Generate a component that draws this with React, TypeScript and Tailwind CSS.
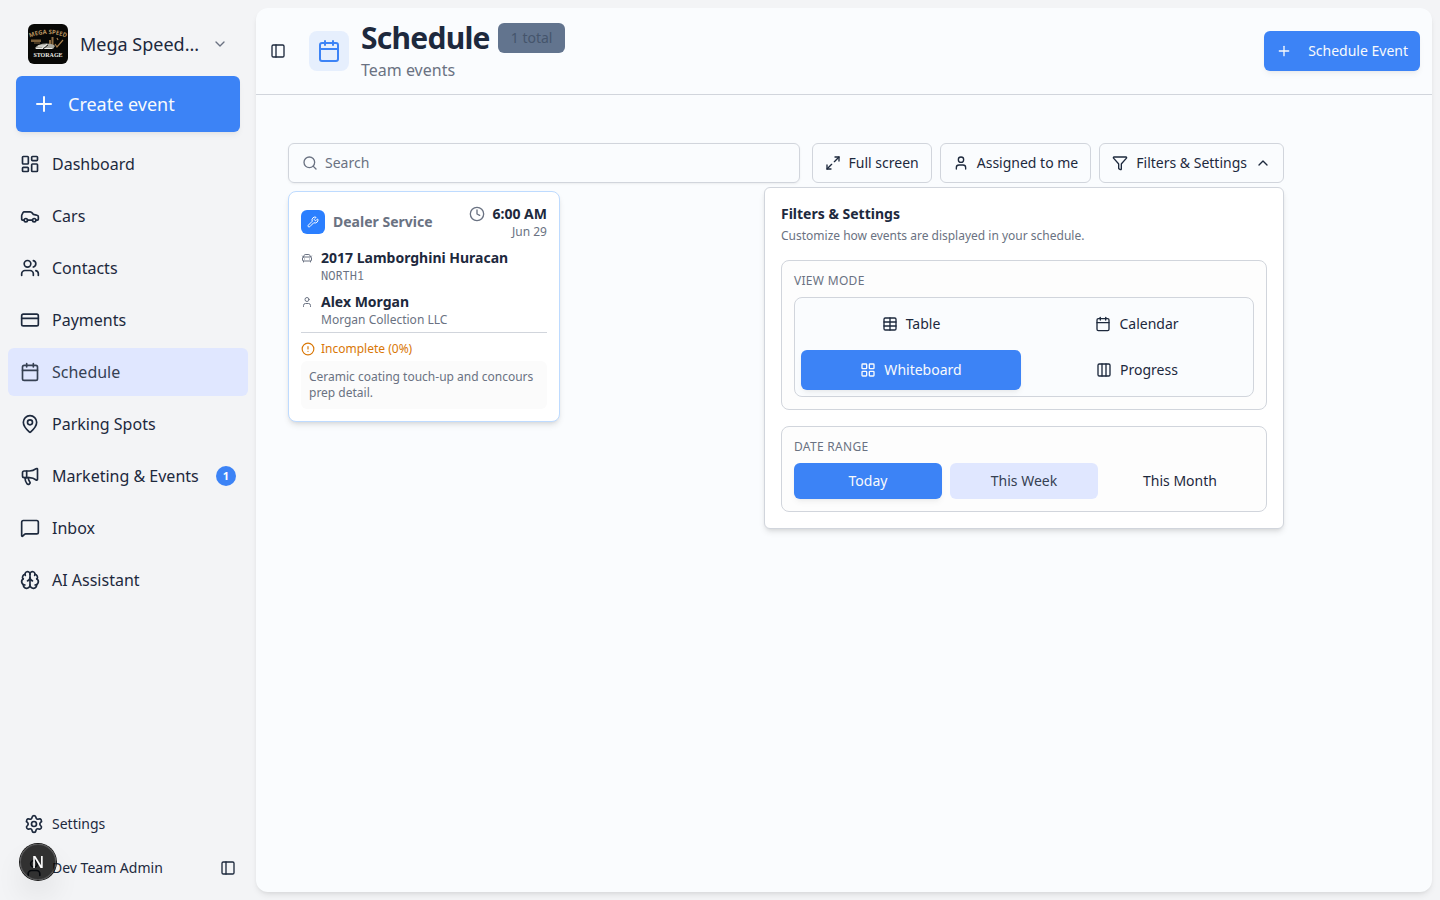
import { useState } from "react";
import {
	Brain,
	Calendar,
	Car,
	CarFront,
	ChevronDown,
	ChevronUp,
	CircleAlert,
	Clock,
	Columns3,
	CreditCard,
	Funnel,
	LayoutDashboard,
	LayoutGrid,
	MapPin,
	Maximize2,
	Megaphone,
	MessageSquare,
	PanelLeft,
	Plus,
	Search,
	Settings,
	Table,
	User,
	Users,
	Wrench,
} from "lucide-react";
import clsx from "clsx";

const navItems = [
	{ label: "Dashboard", icon: LayoutDashboard },
	{ label: "Cars", icon: Car },
	{ label: "Contacts", icon: Users },
	{ label: "Payments", icon: CreditCard },
	{ label: "Schedule", icon: Calendar, active: true },
	{ label: "Parking Spots", icon: MapPin },
	{ label: "Marketing & Events", icon: Megaphone, count: 1 },
	{ label: "Inbox", icon: MessageSquare },
	{ label: "AI Assistant", icon: Brain },
];

const viewModes = [
	{ label: "Table", icon: Table },
	{ label: "Calendar", icon: Calendar },
	{ label: "Whiteboard", icon: LayoutGrid },
	{ label: "Progress", icon: Columns3 },
];

const dateRanges = ["Today", "This Week", "This Month"];

function CompanyLogo() {
	return (
		<svg viewBox="0 0 40 40" className="size-10 shrink-0 rounded-md" aria-hidden="true">
			<rect width="40" height="40" fill="#080806" />
			<path id="logo-arc" d="M1 14 Q20 6 39 14" fill="none" />
			<text fill="#b89460" fontSize="6" fontWeight="700" fontFamily="'Open Sans', sans-serif">
				<textPath href="#logo-arc" startOffset="50%" textAnchor="middle">
					MEGA SPEED
				</textPath>
			</text>
			<path d="M3 15.500h10v2.500H3zM6 18.500h6v1H6z" fill="#7d603a" />
			<path d="M23.500 13h2v9h-2zM21 16h2v5h-2z" fill="#8d6c42" />
			<path d="M27 20l2 3 6-7M29 14l1 2" fill="none" stroke="#a57d4b" strokeWidth="1.200" />
			<path d="M7 24c2-3 6-4.500 11-4.500s8 1 9 2.500l-2 3H8z" fill="#a8a8a0" />
			<path d="M10 22h8M13 25l6-5M8 24.500h16" stroke="#eeeeea" strokeWidth="1" />
			<path d="M15 25l5-4" stroke="#222" strokeWidth="1" />
			<text
				x="20"
				y="33"
				textAnchor="middle"
				fill="#ecebe4"
				fontSize="6"
				fontWeight="700"
				fontFamily="'Liberation Serif', serif"
			>
				STORAGE
			</text>
		</svg>
	);
}

function Sidebar() {
	return (
		<aside className="sticky top-0 flex h-screen w-64 shrink-0 flex-col">
			<button type="button" className="mx-4 mt-6 flex items-center gap-3 px-3 text-left">
				<CompanyLogo />
				<span className="flex-1 text-lg whitespace-nowrap">Mega Speed...</span>
				<ChevronDown className="size-4 text-gray-500" />
			</button>

			<button
				type="button"
				className="mx-4 mt-3 flex h-14 items-center gap-3 rounded-md bg-[#3c83f6] px-4 text-lg text-slate-50 shadow-md shadow-black/5"
			>
				<Plus className="size-6" />
				Create event
			</button>

			<nav className="mt-2 flex flex-col gap-1 px-2">
				{navItems.map(({ label, icon: Icon, active, count }) => (
					<a
						key={label}
						href="#"
						aria-current={active ? "page" : undefined}
						className={clsx(
							"flex h-12 items-center gap-3 rounded-md px-3 text-base",
							active && "bg-[#e0e7ff] text-gray-700",
						)}
					>
						<Icon className="size-5 shrink-0" />
						<span className="flex-1 whitespace-nowrap">{label}</span>
						{count && (
							<span className="flex size-5 items-center justify-center rounded-full bg-[#3c83f6] text-[11px] font-bold text-white">
								{count}
							</span>
						)}
					</a>
				))}
			</nav>

			<div className="mt-auto px-2 pb-3 text-sm">
				<a href="#" className="flex h-10 items-center gap-2 px-4">
					<Settings className="size-5" />
					Settings
				</a>
				<div className="mt-1 flex h-10 items-center gap-2 px-4">
					<User className="size-5" />
					<span className="flex-1">Dev Team Admin</span>
					<button type="button" aria-label="Toggle sidebar" className="-mr-1">
						<PanelLeft className="size-4" />
					</button>
				</div>
			</div>
		</aside>
	);
}

function PageHeader() {
	return (
		<header className="flex items-center border-b border-gray-300 p-3">
			<button type="button" aria-label="Toggle sidebar" className="ml-0.5">
				<PanelLeft className="size-4" />
			</button>
			<div className="ml-[23px] flex size-10 items-center justify-center rounded-lg bg-[#3c83f6]/10 text-[#3c83f6]">
				<Calendar className="size-6" />
			</div>
			<div className="ml-3 flex-1">
				<div className="flex items-center gap-2">
					<h1 className="text-3xl font-bold tracking-tight">Schedule</h1>
					<span className="rounded-md border border-transparent bg-slate-500 px-3 py-1 text-sm text-slate-600">
						1 total
					</span>
				</div>
				<p className="mt-0.5 text-base text-gray-500">Team events</p>
			</div>
			<button
				type="button"
				className="flex h-10 items-center gap-4 rounded-md bg-[#3c83f6] px-3 text-sm text-slate-50 shadow-md shadow-black/5"
			>
				<Plus className="size-4" />
				Schedule Event
			</button>
		</header>
	);
}

function FiltersPanel() {
	const [mode, setMode] = useState("Whiteboard");
	const [range, setRange] = useState("Today");

	return (
		<div className="absolute top-full right-0 z-10 mt-1 w-130 rounded-md border border-gray-300 bg-white p-4 shadow-md">
			<h2 className="text-sm font-bold">Filters & Settings</h2>
			<p className="mt-1 text-xs text-gray-500">
				Customize how events are displayed in your schedule.
			</p>

			<section className="mt-4 rounded-lg border border-gray-300 bg-[#fdfdfd] p-3">
				<h3 className="text-xs tracking-wide text-gray-500 uppercase">View mode</h3>
				<div className="mt-2 grid grid-cols-2 gap-1.5 rounded-lg border border-gray-300 bg-[#fafcfe] p-1.5">
					{viewModes.map(({ label, icon: Icon }) => (
						<button
							key={label}
							type="button"
							onClick={() => setMode(label)}
							className={clsx(
								"flex h-10 items-center justify-center gap-2 rounded-md text-sm",
								mode === label && "bg-[#3c83f6] text-slate-50 shadow-md shadow-black/5",
							)}
						>
							<Icon className="size-4" />
							{label}
						</button>
					))}
				</div>
			</section>

			<section className="mt-4 rounded-lg border border-gray-300 bg-[#fdfdfd] p-3">
				<h3 className="text-xs tracking-wide text-gray-500 uppercase">Date range</h3>
				<div className="mt-2 grid grid-cols-3 gap-2">
					{dateRanges.map((label) => (
						<button
							key={label}
							type="button"
							onClick={() => setRange(label)}
							className={clsx(
								"h-9 rounded-md text-sm",
								range === label && "bg-[#3c83f6] text-slate-50 shadow-md shadow-black/5",
								range !== label && label === "This Week" && "bg-[#e0e7ff] text-gray-700",
							)}
						>
							{label}
						</button>
					))}
				</div>
			</section>
		</div>
	);
}

function Toolbar() {
	const [open, setOpen] = useState(true);
	const buttonClass =
		"flex h-10 items-center gap-2 rounded-md border border-gray-300 bg-[#fafcfe] px-3 text-sm whitespace-nowrap";

	return (
		<div className="relative flex w-249 max-w-full items-center gap-3">
			<label className="flex h-10 min-w-0 flex-1 items-center gap-1.5 rounded-md border border-gray-300 px-3 shadow-sm shadow-black/5">
				<Search className="mx-px size-4 shrink-0 text-gray-500" />
				<input
					type="search"
					aria-label="Search"
					placeholder="Search"
					className="min-w-0 flex-1 bg-transparent text-sm outline-none placeholder:text-gray-500"
				/>
			</label>
			<div className="flex gap-2">
				<button type="button" className={buttonClass}>
					<Maximize2 className="size-4" />
					Full screen
				</button>
				<button type="button" className={buttonClass}>
					<User className="size-4" />
					Assigned to me
				</button>
				<button
					type="button"
					aria-expanded={open}
					onClick={() => setOpen(!open)}
					className={buttonClass}
				>
					<Funnel className="size-4" />
					Filters & Settings
					{open ? <ChevronUp className="size-4" /> : <ChevronDown className="size-4" />}
				</button>
			</div>
			{open && <FiltersPanel />}
		</div>
	);
}

function EventCard() {
	return (
		<article className="mt-2 w-68 rounded-lg border border-blue-200 bg-white p-3 text-xs text-gray-500 shadow-md">
			<div className="flex items-center gap-2">
				<div className="flex size-6 items-center justify-center rounded-md bg-[#2b7fff] text-white">
					<Wrench className="size-3" />
				</div>
				<span className="flex-1 text-sm font-bold">Dealer Service</span>
				<div className="text-right">
					<div className="flex items-center gap-2">
						<Clock className="size-4" />
						<span className="text-sm font-bold text-slate-800">6:00 AM</span>
					</div>
					<div>Jun 29</div>
				</div>
			</div>

			<div className="mt-2 flex gap-2">
				<CarFront className="mt-1 size-3" />
				<div>
					<div className="text-sm font-bold text-slate-800">2017 Lamborghini Huracan</div>
					<div className="font-['Noto_Sans_Mono','Liberation_Mono',monospace]">NORTH1</div>
				</div>
			</div>

			<div className="mt-2 flex gap-2">
				<User className="mt-1 size-3" />
				<div>
					<div className="text-sm font-bold text-slate-800">Alex Morgan</div>
					<div>Morgan Collection LLC</div>
				</div>
			</div>

			<div className="mt-1 border-t border-gray-300 pt-2">
				<div className="flex items-center gap-1.5 text-[#d97706]">
					<CircleAlert className="size-3.5" />
					Incomplete (0%)
				</div>
				<p className="mt-1 rounded-md bg-[#fbfbfb] p-2">
					Ceramic coating touch-up and concours prep detail.
				</p>
			</div>
		</article>
	);
}

export default function App() {
	return (
		<div className="flex min-h-screen bg-gray-100 font-['Noto_Sans',sans-serif] text-slate-800">
			<Sidebar />
			<main className="my-2 mr-2 min-w-0 flex-1 rounded-xl bg-[#fafcfe] shadow-md shadow-black/8">
				<PageHeader />
				<div className="px-8 pt-12 pb-8">
					<Toolbar />
					<EventCard />
				</div>
			</main>

			<button
				type="button"
				aria-label="Open dev tools"
				className="fixed bottom-5 left-5 flex size-9 items-center justify-center rounded-full bg-black/80 text-base font-medium text-white shadow-[0_0_0_1px_#171717,inset_0_0_0_1px_#ffffff24,0_16px_32px_-8px_#0000003d]"
			>
				N
			</button>
		</div>
	);
}
